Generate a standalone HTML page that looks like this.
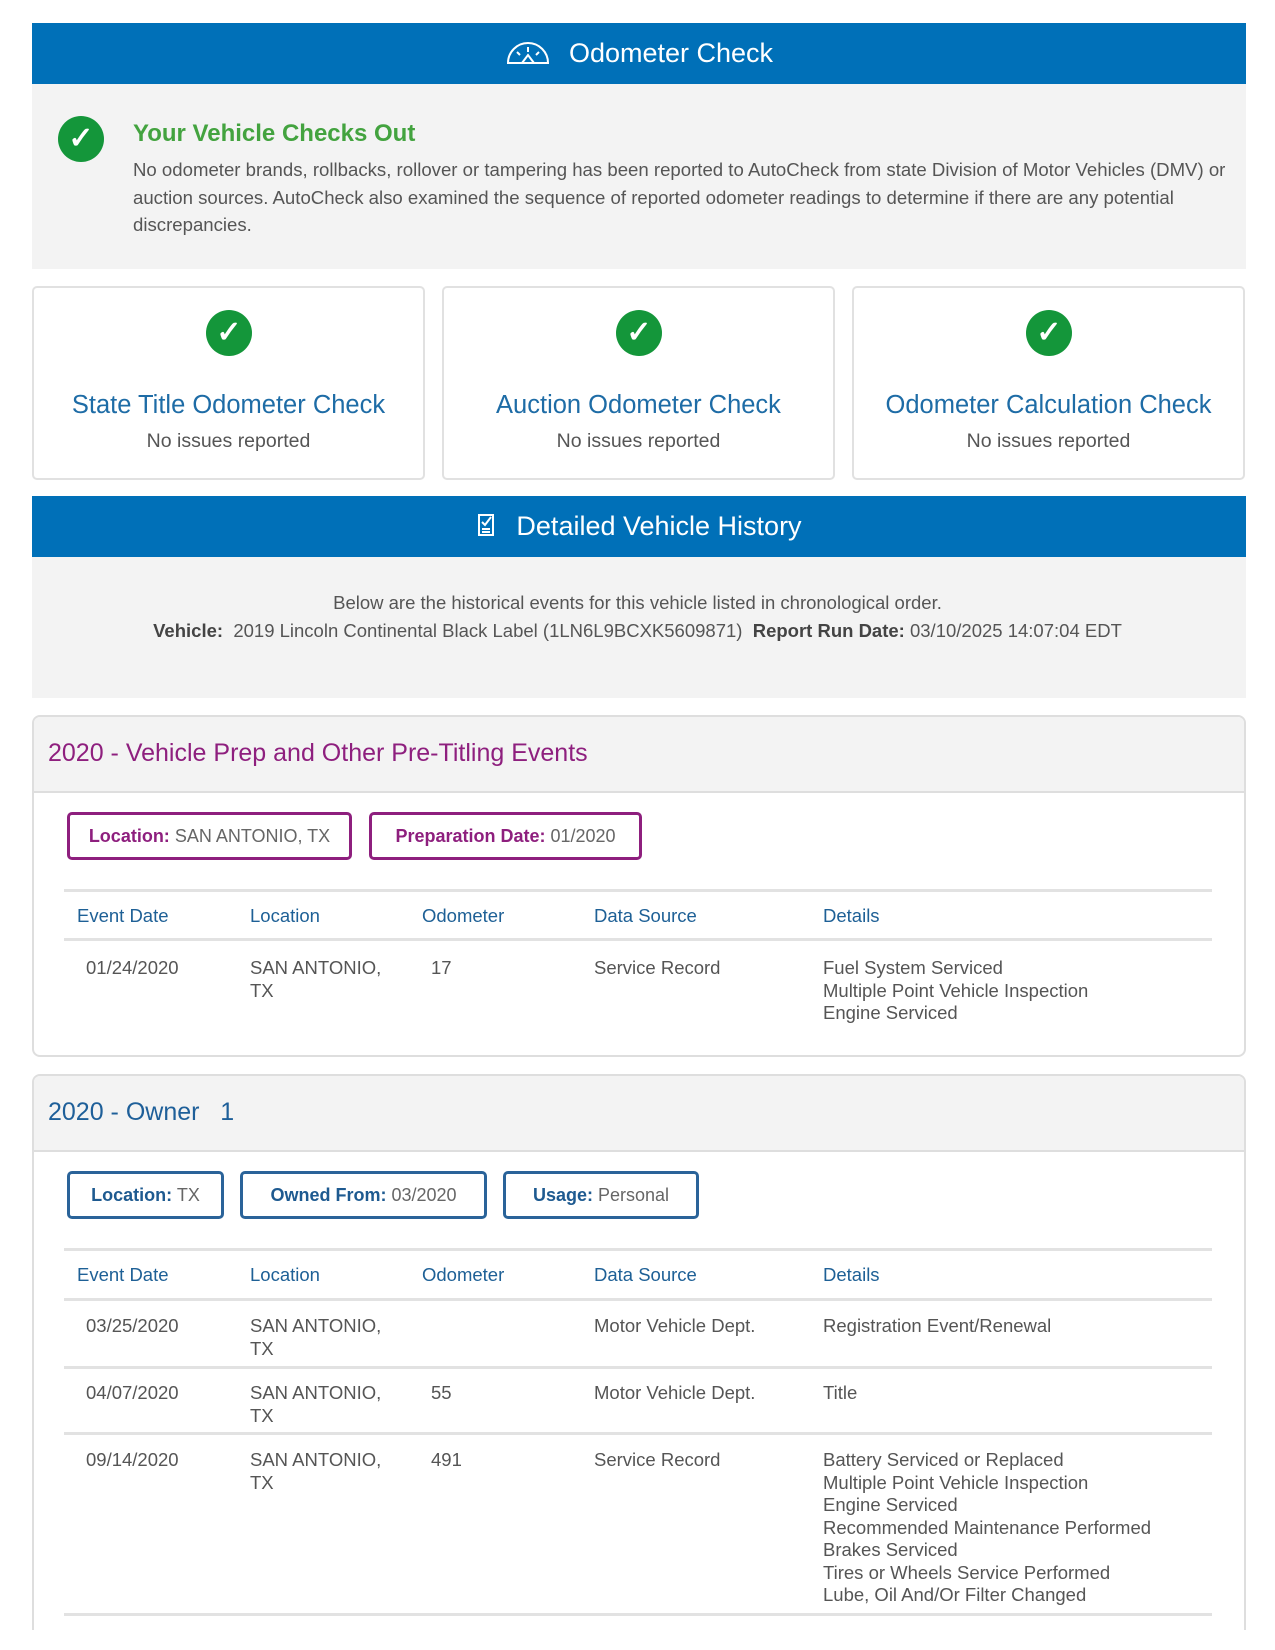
<!DOCTYPE html>
<html><head><meta charset="utf-8"><style>
*{margin:0;padding:0;box-sizing:border-box}
body{width:1275px;height:1650px;background:#fff;font-family:"Liberation Sans",sans-serif;color:#555;position:relative;overflow:hidden}
.a{position:absolute;white-space:nowrap}
.bar{position:absolute;left:32px;width:1214px;background:#0070b8;color:#fff;font-size:27px;text-align:center}
.grey{position:absolute;left:32px;width:1214px;background:#f3f3f3}
.card{position:absolute;top:286px;height:194px;width:393px;border:2px solid #e1e1e1;border-radius:5px;text-align:center}
.card .t{position:absolute;top:103px;left:0;right:0;font-size:25.5px;color:#1e6ca6}
.card .s{position:absolute;top:142px;left:0;right:0;font-size:19.5px;color:#555}
.chk{position:absolute;width:46px;height:46px;border-radius:50%;background:#14963a;color:#fff;font-size:30px;line-height:46px;text-align:center;font-weight:bold}
.box{position:absolute;left:32px;width:1214px;border:2px solid #dedede;border-radius:8px;background:#fff}
.hd{position:absolute;left:0;right:0;top:0;background:#f3f3f3;border-bottom:2px solid #dedede;border-radius:6px 6px 0 0}
.tag{position:absolute;height:48px;border:3px solid;border-radius:5px;font-size:18px;line-height:42px;text-align:center}
.line{position:absolute;left:64px;width:1148px;height:3px;background:#e2e2e2}
.th{position:absolute;font-size:18.5px;color:#1e6096}
.td{position:absolute;font-size:18.5px;color:#555;line-height:22.5px;white-space:nowrap}
</style></head><body>

<div class="bar" style="top:23px;height:61px;line-height:61px">
<svg width="46" height="28" viewBox="0 0 46 28" style="vertical-align:-4px;margin-right:18px" fill="none" stroke="#fff" stroke-width="2"><path d="M3 25 A20 20 0 0 1 43 25 Z"/><path d="M23 9v5M12 14l3 3M34 14l-3 3M17 25l6-8 6 8"/></svg>Odometer Check</div>
<div class="grey" style="top:84px;height:185px"></div>
<div class="chk" style="left:58px;top:116px">✓</div>
<div class="a" style="left:133px;top:120px;font-size:24px;font-weight:bold;color:#43a33f">Your Vehicle Checks Out</div>
<div class="a" style="left:133px;top:156px;font-size:18.6px;line-height:27.5px;color:#555">No odometer brands, rollbacks, rollover or tampering has been reported to AutoCheck from state Division of Motor Vehicles (DMV) or<br>auction sources. AutoCheck also examined the sequence of reported odometer readings to determine if there are any potential<br>discrepancies.</div>

<div class="card" style="left:32px"><div class="chk" style="left:172px;top:22px">✓</div><div class="t">State Title Odometer Check</div><div class="s">No issues reported</div></div>
<div class="card" style="left:442px"><div class="chk" style="left:172px;top:22px">✓</div><div class="t">Auction Odometer Check</div><div class="s">No issues reported</div></div>
<div class="card" style="left:852px"><div class="chk" style="left:172px;top:22px">✓</div><div class="t">Odometer Calculation Check</div><div class="s">No issues reported</div></div>

<div class="bar" style="top:496px;height:61px;line-height:61px">
<svg width="20" height="26" viewBox="0 0 20 26" style="vertical-align:-3px;margin-right:20px" fill="none" stroke="#fff" stroke-width="2"><rect x="3" y="3" width="14" height="20"/><path d="M6 10l3 3 6-8M6 17h8M6 20h8"/></svg>Detailed Vehicle History</div>
<div class="grey" style="top:557px;height:141px"></div>
<div class="a" style="left:0;width:1275px;text-align:center;top:592px;font-size:18.5px;color:#555">Below are the historical events for this vehicle listed in chronological order.</div>
<div class="a" style="left:0;width:1275px;text-align:center;top:620px;font-size:18.5px;color:#555"><b style="color:#444">Vehicle:</b>&nbsp; 2019 Lincoln Continental Black Label (1LN6L9BCXK5609871)&nbsp; <b style="color:#444">Report Run Date:</b> 03/10/2025 14:07:04 EDT</div>

<div class="box" style="top:715px;height:342px"><div class="hd" style="height:76px"></div></div>
<div class="a" style="left:48px;top:739px;font-size:25px;color:#8e1f7e">2020 - Vehicle Prep and Other Pre-Titling Events</div>
<div class="tag" style="left:67px;top:812px;width:285px;border-color:#8e1f7e;color:#666"><b style="color:#8e1f7e">Location:</b> SAN ANTONIO, TX</div>
<div class="tag" style="left:369px;top:812px;width:273px;border-color:#8e1f7e;color:#666"><b style="color:#8e1f7e">Preparation Date:</b> 01/2020</div>
<div class="line" style="top:889px"></div>
<div class="th" style="left:77px;top:905px">Event Date</div><div class="th" style="left:250px;top:905px">Location</div><div class="th" style="left:422px;top:905px">Odometer</div><div class="th" style="left:594px;top:905px">Data Source</div><div class="th" style="left:823px;top:905px">Details</div>
<div class="line" style="top:938px"></div>
<div class="td" style="left:86px;top:957px">01/24/2020</div>
<div class="td" style="left:250px;top:957px">SAN ANTONIO,<br>TX</div>
<div class="td" style="left:431px;top:957px">17</div>
<div class="td" style="left:594px;top:957px">Service Record</div>
<div class="td" style="left:823px;top:957px">Fuel System Serviced<br>Multiple Point Vehicle Inspection<br>Engine Serviced</div>

<div class="box" style="top:1074px;height:556px;border-bottom:none;border-radius:8px 8px 0 0"><div class="hd" style="height:76px"></div></div>
<div class="a" style="left:48px;top:1098px;font-size:25px;color:#1e5f99">2020 - Owner &nbsp; 1</div>
<div class="tag" style="left:67px;top:1171px;width:157px;border-color:#2a6399;color:#666"><b style="color:#1e5a90">Location:</b> TX</div>
<div class="tag" style="left:240px;top:1171px;width:247px;border-color:#2a6399;color:#666"><b style="color:#1e5a90">Owned From:</b> 03/2020</div>
<div class="tag" style="left:503px;top:1171px;width:196px;border-color:#2a6399;color:#666"><b style="color:#1e5a90">Usage:</b> Personal</div>
<div class="line" style="top:1248px"></div>
<div class="th" style="left:77px;top:1264px">Event Date</div><div class="th" style="left:250px;top:1264px">Location</div><div class="th" style="left:422px;top:1264px">Odometer</div><div class="th" style="left:594px;top:1264px">Data Source</div><div class="th" style="left:823px;top:1264px">Details</div>
<div class="line" style="top:1298px"></div>
<div class="td" style="left:86px;top:1315px">03/25/2020</div><div class="td" style="left:250px;top:1315px">SAN ANTONIO,<br>TX</div><div class="td" style="left:594px;top:1315px">Motor Vehicle Dept.</div><div class="td" style="left:823px;top:1315px">Registration Event/Renewal</div>
<div class="line" style="top:1366px"></div>
<div class="td" style="left:86px;top:1382px">04/07/2020</div><div class="td" style="left:250px;top:1382px">SAN ANTONIO,<br>TX</div><div class="td" style="left:431px;top:1382px">55</div><div class="td" style="left:594px;top:1382px">Motor Vehicle Dept.</div><div class="td" style="left:823px;top:1382px">Title</div>
<div class="line" style="top:1432px"></div>
<div class="td" style="left:86px;top:1449px">09/14/2020</div><div class="td" style="left:250px;top:1449px">SAN ANTONIO,<br>TX</div><div class="td" style="left:431px;top:1449px">491</div><div class="td" style="left:594px;top:1449px">Service Record</div><div class="td" style="left:823px;top:1449px">Battery Serviced or Replaced<br>Multiple Point Vehicle Inspection<br>Engine Serviced<br>Recommended Maintenance Performed<br>Brakes Serviced<br>Tires or Wheels Service Performed<br>Lube, Oil And/Or Filter Changed</div>
<div class="line" style="top:1613px"></div>
</body></html>
